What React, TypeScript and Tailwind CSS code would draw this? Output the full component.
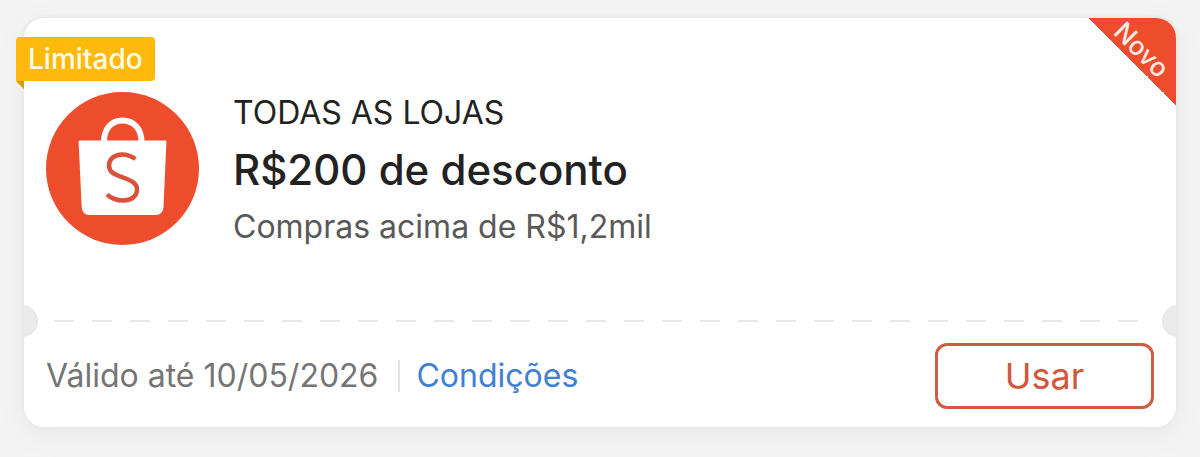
import type { ReactNode } from "react";

function StoreLogo() {
  return (
    <svg
      viewBox="0 0 153 153"
      className="size-[153px] shrink-0"
      role="img"
      aria-label="Shopee"
    >
      <circle cx="76.5" cy="76.5" r="76.5" fill="#ee4d2d" />
      <path
        d="M58 50C58 36 66 28.500 76.500 28.500S95.500 36 95.500 50"
        fill="none"
        stroke="#fff"
        strokeWidth="6"
      />
      <path
        d="M34 48.500H119C120 48.500 120.500 49 120.400 50L117.500 115C117.200 120 114 123 109.500 123H43.500C39 123 36 120 35.700 115L32.600 50C32.500 49 33 48.500 34 48.500Z"
        fill="#fff"
      />
      <path
        d="M89.500 67C85 64 81 62.500 76 62.500C68.500 62.500 63 67 63 73.500C63 80.500 69 82.500 77 85.500C86 88.700 91 91.500 91 97.500C91 104.500 85 108.500 77 108.500C70.500 108.500 65.500 106.500 61 102.500"
        fill="none"
        stroke="#d9523a"
        strokeWidth="4.500"
      />
    </svg>
  );
}

function LimitedTag({ children }: { children: ReactNode }) {
  return (
    <div className="absolute top-[19px] -left-2">
      <div className="flex h-11 items-center rounded-sm rounded-bl-none bg-[#feb90b] px-3 text-[28px] leading-8 font-medium text-[#fffbe8]">
        {children}
      </div>
      <div className="size-2 bg-[#d79b16] [clip-path:polygon(0_0,100%_0,100%_100%)]" />
    </div>
  );
}

function NewRibbon({ children }: { children: ReactNode }) {
  return (
    <div className="absolute top-0 right-0 size-[87px] rounded-tr-[20px] bg-[linear-gradient(45deg,transparent_50%,#ee4d2d_50%)]">
      <span className="absolute top-4 left-5 rotate-45 text-[26px] leading-8 font-medium text-[#ffeae4]">
        {children}
      </span>
    </div>
  );
}

function Perforation() {
  return (
    <div className="relative flex h-8 items-center overflow-hidden px-[30px]">
      <span className="absolute top-0 -left-[18px] size-8 rounded-full border-2 border-[#e8e8e8] bg-[#ebebeb]" />
      <span className="h-0.5 flex-1 bg-[repeating-linear-gradient(to_right,#e8e8e8_0_20px,transparent_20px_38px)]" />
      <span className="absolute top-0 -right-[18px] size-8 rounded-full border-2 border-[#e8e8e8] bg-[#ebebeb]" />
    </div>
  );
}

export default function App() {
  return (
    <main className="min-h-screen bg-[#f4f4f4] px-6 pt-[18px] pb-[30px] font-['Inter',sans-serif]">
      <article className="relative rounded-[20px] bg-white shadow-[0_0_2px_2px_#e9e9e9,0_6px_28px_#e6e6e6]">
        <LimitedTag>Limitado</LimitedTag>
        <NewRibbon>Novo</NewRibbon>

        <div className="flex gap-[34px] px-[22px] pt-[74px] pb-[60px]">
          <StoreLogo />
          <div className="flex h-[153px] flex-col gap-2 pt-px">
            <p className="text-[32px] leading-10 text-[#222]">TODAS AS LOJAS</p>
            <h2 className="text-[42px] leading-[58px] font-medium text-[#222]">
              R$200 de desconto
            </h2>
            <p className="text-[32px] leading-10 text-[#595959]">
              Compras acima de R$1,2mil
            </p>
          </div>
        </div>

        <Perforation />

        <div className="flex items-center justify-between px-[22px] pt-1.5 pb-[18px]">
          <div className="flex items-center text-[32px] leading-10">
            <span className="text-[#757575]">Válido até 10/05/2026</span>
            <span className="mr-4 ml-5 h-8 w-0.5 bg-[#e4e4e4]" />
            <a href="#condicoes" className="text-[#4080d4]">
              Condições
            </a>
          </div>
          <button
            type="button"
            className="h-[66px] w-[219px] rounded-xl border-[3px] border-[#cf5c43] text-[36px] leading-10 text-[#d2573b]"
          >
            Usar
          </button>
        </div>
      </article>
    </main>
  );
}
